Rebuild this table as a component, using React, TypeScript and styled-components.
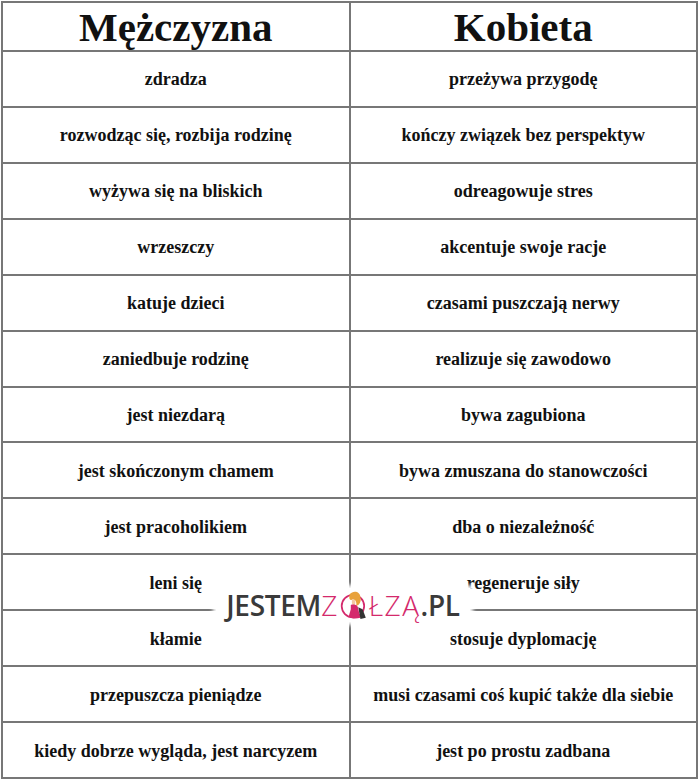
import React from 'react';
import styled, { createGlobalStyle } from 'styled-components';

const GlobalStyle = createGlobalStyle`
  html, body {
    margin: 0;
    padding: 0;
    background: #ffffff;
  }
  * {
    box-sizing: border-box;
  }
`;

const rows: [string, string][] = [
  ['zdradza', 'przeżywa przygodę'],
  ['rozwodząc się, rozbija rodzinę', 'kończy związek bez perspektyw'],
  ['wyżywa się na bliskich', 'odreagowuje stres'],
  ['wrzeszczy', 'akcentuje swoje racje'],
  ['katuje dzieci', 'czasami puszczają nerwy'],
  ['zaniedbuje rodzinę', 'realizuje się zawodowo'],
  ['jest niezdarą', 'bywa zagubiona'],
  ['jest skończonym chamem', 'bywa zmuszana do stanowczości'],
  ['jest pracoholikiem', 'dba o niezależność'],
  ['leni się', 'regeneruje siły'],
  ['kłamie', 'stosuje dyplomację'],
  ['przepuszcza pieniądze', 'musi czasami coś kupić także dla siebie'],
  ['kiedy dobrze wygląda, jest narcyzem', 'jest po prostu zadbana'],
];

const Page = styled.div`
  position: relative;
  width: 700px;
  height: 780px;
  padding: 1px 0 0 1px;
`;

const Sheet = styled.div`
  display: grid;
  grid-template-columns: 1fr 1fr;
  grid-template-rows: 49px repeat(13, 1fr);
  width: 697px;
  height: 778px;
  border-top: 2px solid #777;
  border-left: 2px solid #777;
  font-family: 'Liberation Serif', 'Times New Roman', serif;
  font-weight: 700;
  color: #111;
`;

const Cell = styled.div<{ $head?: boolean }>`
  display: flex;
  align-items: center;
  justify-content: center;
  border-right: 2px solid #777;
  border-bottom: 2px solid #777;
  font-size: ${(p) => (p.$head ? '41px' : '18px')};
  line-height: 1;
  padding-top: ${(p) => (p.$head ? '2px' : '1px')};
  white-space: nowrap;
`;

const Watermark = styled.div`
  position: absolute;
  left: 216px;
  top: 588px;
  width: 254px;
  height: 34px;
  display: flex;
  align-items: center;
  justify-content: center;
  background: #ffffff;
  box-shadow: 0 0 4px 3px #ffffff;
  font-family: 'Open Sans', 'Liberation Sans', sans-serif;
  font-size: 28px;
  line-height: 1;
`;

const Dark = styled.span`
  color: #3a3a3a;
  font-weight: 600;
  letter-spacing: -0.3px;
`;

const Pink = styled.span`
  color: #d4296c;
  font-weight: 300;
  letter-spacing: 1.5px;
  display: flex;
  align-items: center;
`;

const Girl = () => (
  <svg width="28" height="30" viewBox="0 0 26 28" style={{ margin: '0 1px' }}>
    <circle cx="12" cy="15" r="10.5" fill="none" stroke="#d4296c" strokeWidth="1.6" />
    <path d="M9 4 C12 0 19 1 19 7 C20 11 18 14 15 15 C16 11 14 8 11 9 C9 10 8 8 9 4 Z" fill="#e8a23b" />
    <path d="M11 9 C13 8 15 10 14 13 C13 15 11 14 11 12 Z" fill="#f3c9a4" />
    <path d="M10 14 C13 13 17 14 17 18 L19 26 C15 27 11 27 8 25 L10 18 Z" fill="#d4296c" />
    <path d="M17 16 L21 18 L24 26 L19 27 Z" fill="#333" />
  </svg>
);

export default function App() {
  return (
    <Page>
      <GlobalStyle />
      <Sheet>
        <Cell $head>Mężczyzna</Cell>
        <Cell $head>Kobieta</Cell>
        {rows.map(([m, k]) => (
          <React.Fragment key={m}>
            <Cell>{m}</Cell>
            <Cell>{k}</Cell>
          </React.Fragment>
        ))}
      </Sheet>
      <Watermark>
        <Dark>JESTEM</Dark>
        <Pink>
          Z<Girl />ŁZĄ
        </Pink>
        <Dark>.PL</Dark>
      </Watermark>
    </Page>
  );
}
